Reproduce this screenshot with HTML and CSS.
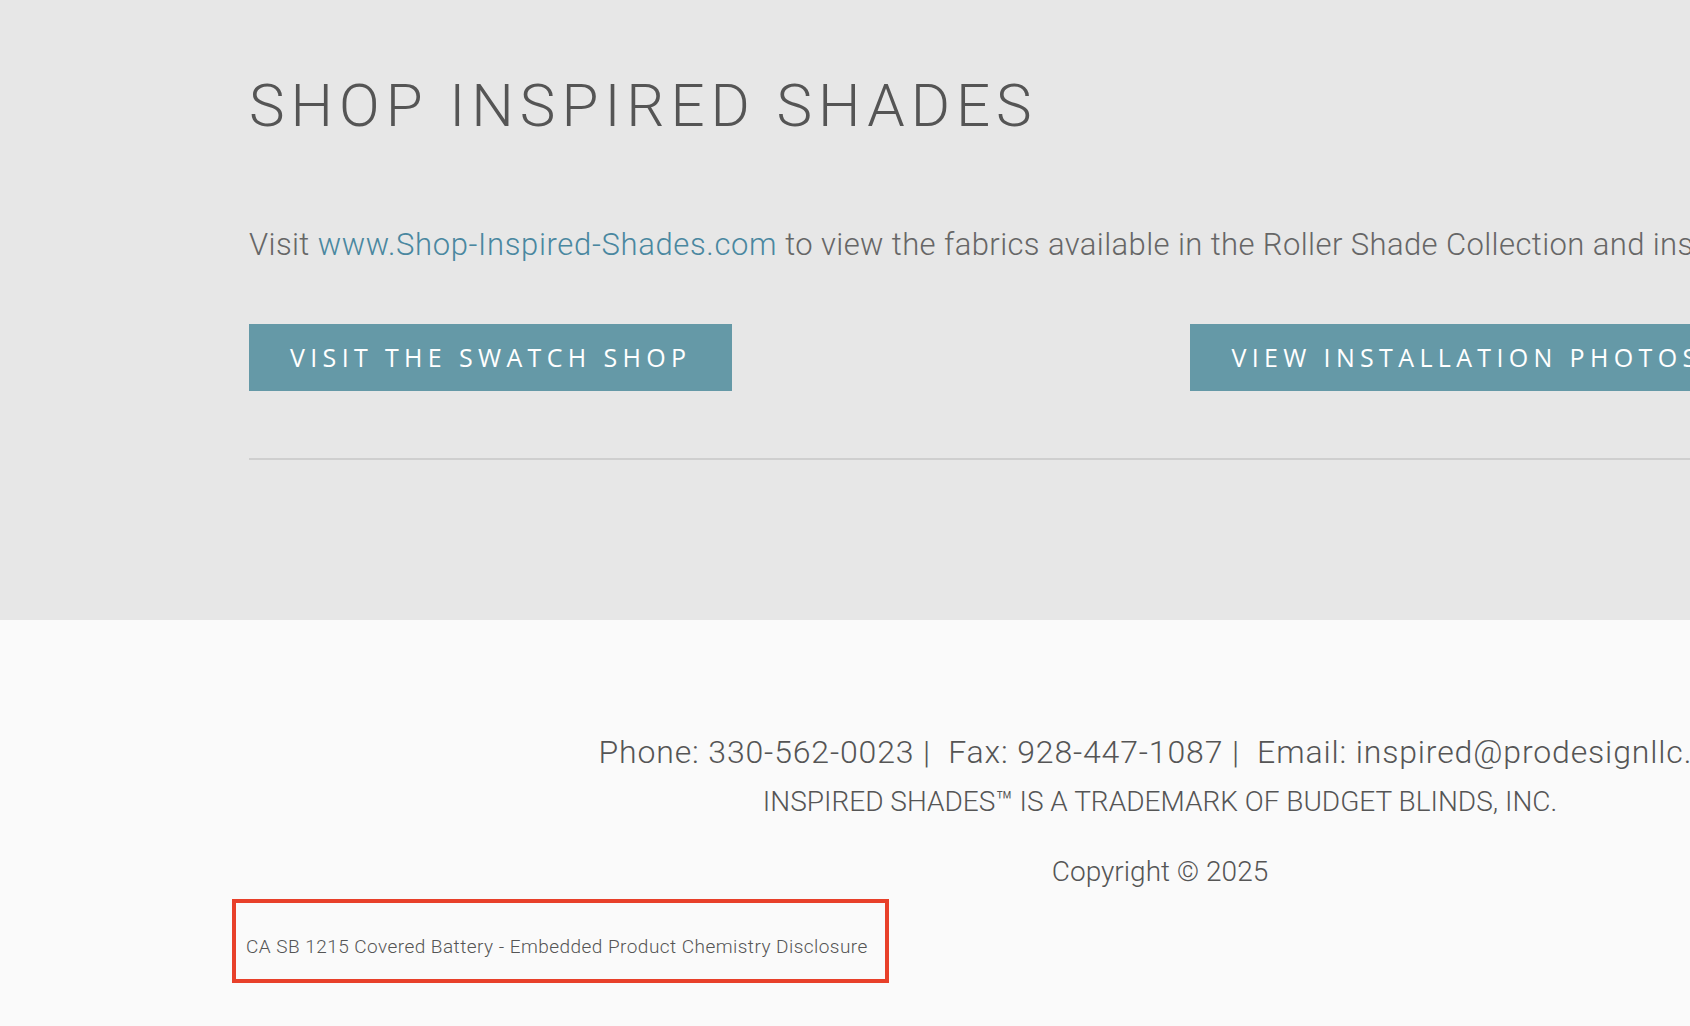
FILE: index.html
```html
<!DOCTYPE html>
<html lang="en">
<head>
<meta charset="utf-8">
<title>Shop Inspired Shades</title>
<link rel="stylesheet" href="styles.css">
</head>
<body>
<section class="shop">
  <div class="shop-inner">
    <h1 class="shop-title">SHOP INSPIRED SHADES</h1>
    <p class="shop-text">Visit <a class="shop-link" href="#">www.Shop-Inspired-Shades.com</a> to view the fabrics available in the Roller Shade Collection and inspiration photos from our customers.</p>
    <div class="shop-buttons">
      <a class="btn" href="#">VISIT THE SWATCH SHOP</a>
      <a class="btn btn-second" href="#">VIEW INSTALLATION PHOTOS</a>
    </div>
    <hr class="shop-rule">
  </div>
</section>
<footer class="footer">
  <div class="footer-inner">
    <p class="footer-contact">Phone: 330-562-0023 |&nbsp; Fax: 928-447-1087 |&nbsp; Email: inspired@prodesignllc.com</p>
    <p class="footer-trademark">INSPIRED SHADES™ IS A TRADEMARK OF BUDGET BLINDS, INC.</p>
    <p class="footer-copy">Copyright © 2025</p>
    <div class="footer-disclosure-row">
      <a class="footer-disclosure" href="#">CA SB 1215 Covered Battery - Embedded Product Chemistry Disclosure</a>
    </div>
  </div>
</footer>
</body>
</html>
```
FILE: styles.css
```css
html, body {
  margin: 0;
  padding: 0;
  overflow-x: hidden;
}
body {
  font-family: Roboto, "Liberation Sans", Arial, sans-serif;
  font-weight: 300;
  background: #fafafa;
  width: 1690px;
  height: 1026px;
  overflow: hidden;
}
.shop {
  background: #e7e7e7;
  padding: 70px 0 160px 249px;
}
.shop-inner {
  width: 1822px;
}
.shop-title {
  margin: 0;
  font-size: 60px;
  line-height: 72px;
  font-weight: 300;
  letter-spacing: 6px;
  color: #555555;
  white-space: nowrap;
}
.shop-text {
  margin: 85px 0 0;
  font-size: 31px;
  line-height: 36px;
  letter-spacing: 0.4px;
  color: #666666;
  white-space: nowrap;
}
.shop-link {
  color: #4a87a0;
  text-decoration: none;
  letter-spacing: 0.65px;
}
.shop-buttons {
  margin-top: 61px;
  display: flex;
  gap: 458px;
}
.btn {
  display: block;
  flex: none;
  height: 67px;
  line-height: 67px;
  padding: 0 41px;
  background: #6599a7;
  color: #ffffff;
  font-family: "Open Sans", "Liberation Sans", sans-serif;
  font-weight: 400;
  font-size: 25px;
  letter-spacing: 5.35px;
  text-decoration: none;
  white-space: nowrap;
}
.shop-rule {
  margin: 67px 0 0;
  border: 0;
  height: 2px;
  background: #cfcfcf;
}
.footer {
  background: #fafafa;
  padding: 113px 0 0 232px;
}
.footer-inner {
  width: 1856px;
  color: #555555;
}
.footer-contact {
  margin: 0;
  padding-left: 36px;
  text-align: center;
  font-size: 32px;
  line-height: 38px;
  letter-spacing: 0.85px;
  white-space: nowrap;
}
.footer-trademark {
  margin: 15px 0 0;
  text-align: center;
  font-size: 28px;
  line-height: 32px;
}
.footer-copy {
  margin: 36px 0 0;
  text-align: center;
  font-size: 28px;
  line-height: 35px;
}
.footer-disclosure-row {
  margin-top: 10px;
}
.footer-disclosure {
  display: inline-block;
  border: 4px solid #e8402a;
  padding: 32px 17px 21px 10px;
  font-size: 19px;
  line-height: 23px;
  letter-spacing: 0.46px;
  color: #555555;
  text-decoration: none;
}
```
